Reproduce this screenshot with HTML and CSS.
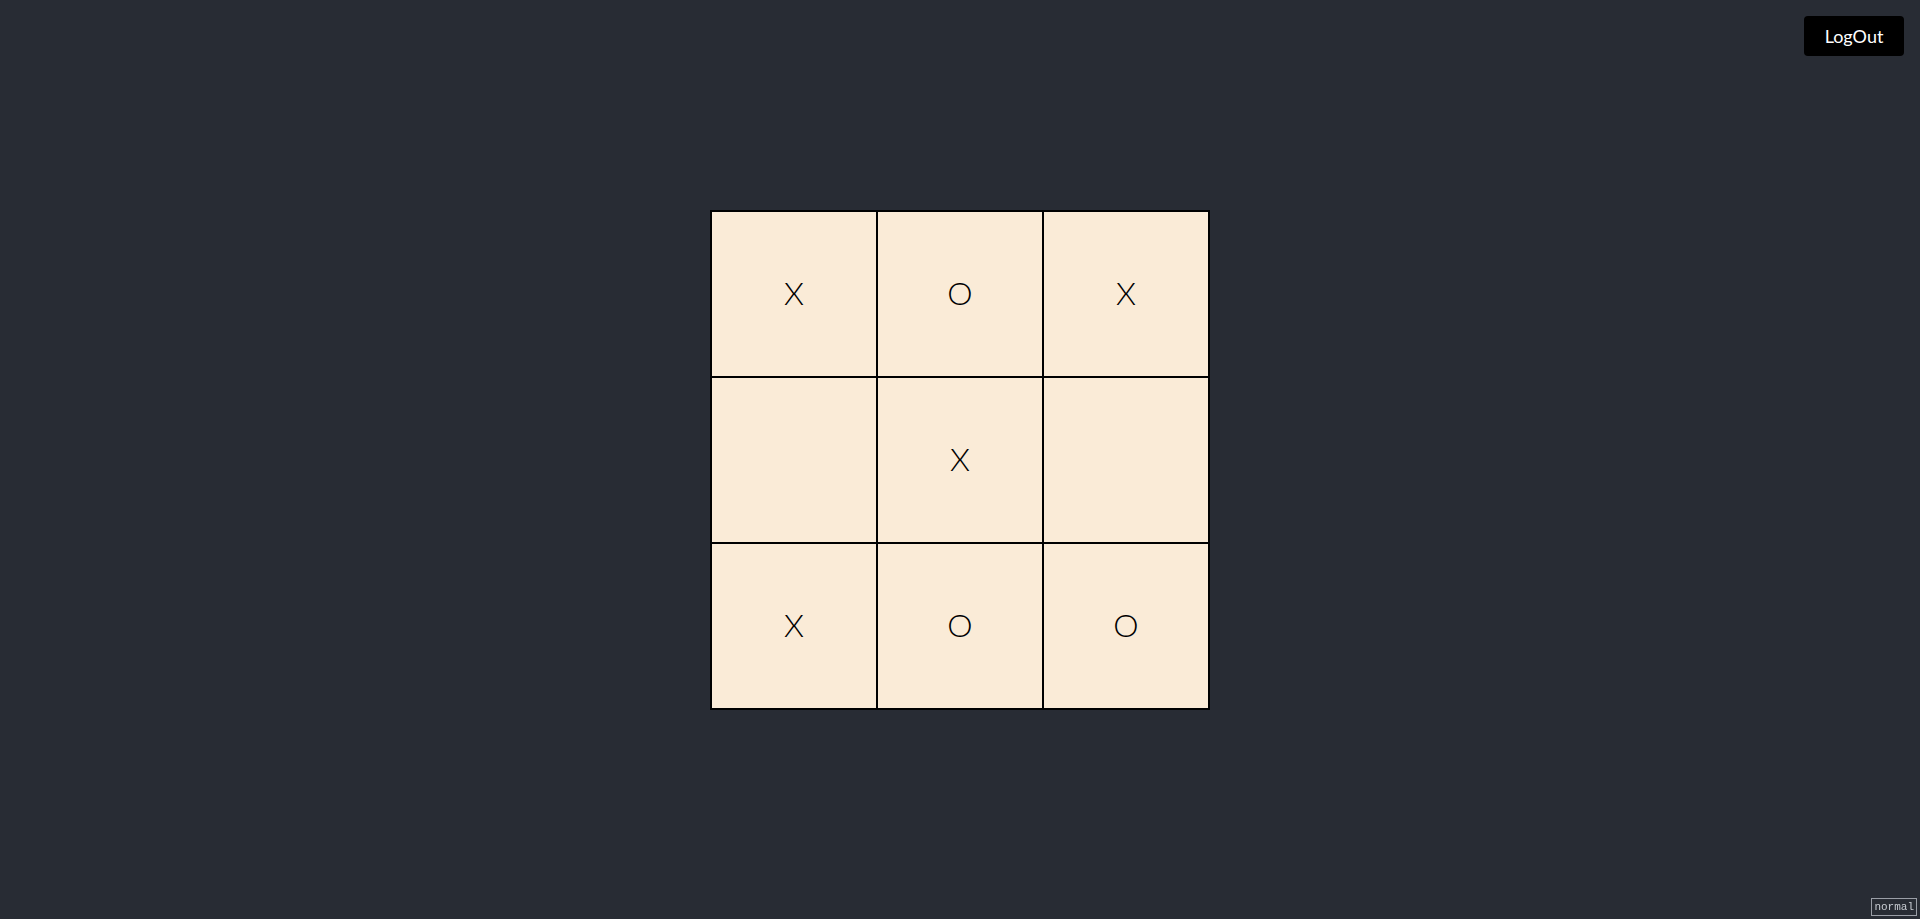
FILE: index.html
```html
<!DOCTYPE html>
<html lang="en">
<head>
<meta charset="utf-8">
<title>Tic Tac Toe</title>
<link rel="stylesheet" href="styles.css">
</head>
<body>
<div class="app">
  <button class="logout">LogOut</button>
  <div class="board">
    <div class="cell">X</div>
    <div class="cell">O</div>
    <div class="cell">X</div>
    <div class="cell"></div>
    <div class="cell">X</div>
    <div class="cell"></div>
    <div class="cell">X</div>
    <div class="cell">O</div>
    <div class="cell">O</div>
  </div>
  <div class="mode">normal</div>
</div>
</body>
</html>
```
FILE: styles.css
```css
html, body {
  margin: 0;
  padding: 0;
  height: 100%;
}
body {
  background: #282c34;
  font-family: Lato, "Noto Sans", sans-serif;
}
.app {
  height: 919px;
  display: flex;
  align-items: center;
  justify-content: center;
}
.logout {
  position: fixed;
  top: 16px;
  right: 16px;
  width: 100px;
  height: 40px;
  background: #000;
  color: #fff;
  border: none;
  border-radius: 4px;
  font-family: Lato, "Noto Sans", sans-serif;
  font-size: 18px;
  padding: 0;
}
.board {
  display: grid;
  grid-template-columns: repeat(3, 166px);
  grid-template-rows: repeat(3, 166px);
  border: 1px solid #000;
  margin-top: 1px;
}
.cell {
  box-sizing: border-box;
  border: 1px solid #000;
  background: #faebd7;
  display: flex;
  align-items: center;
  justify-content: center;
  padding-bottom: 2px;
  font-size: 32px;
  font-weight: 300;
  line-height: 1;
  color: #000;
}
.mode {
  position: fixed;
  right: 3px;
  bottom: 3px;
  border: 1px solid #9a9ea6;
  color: #c8ccd2;
  font-family: "Liberation Mono", monospace;
  font-size: 11px;
  line-height: 16px;
  padding: 0 2px;
}
```
